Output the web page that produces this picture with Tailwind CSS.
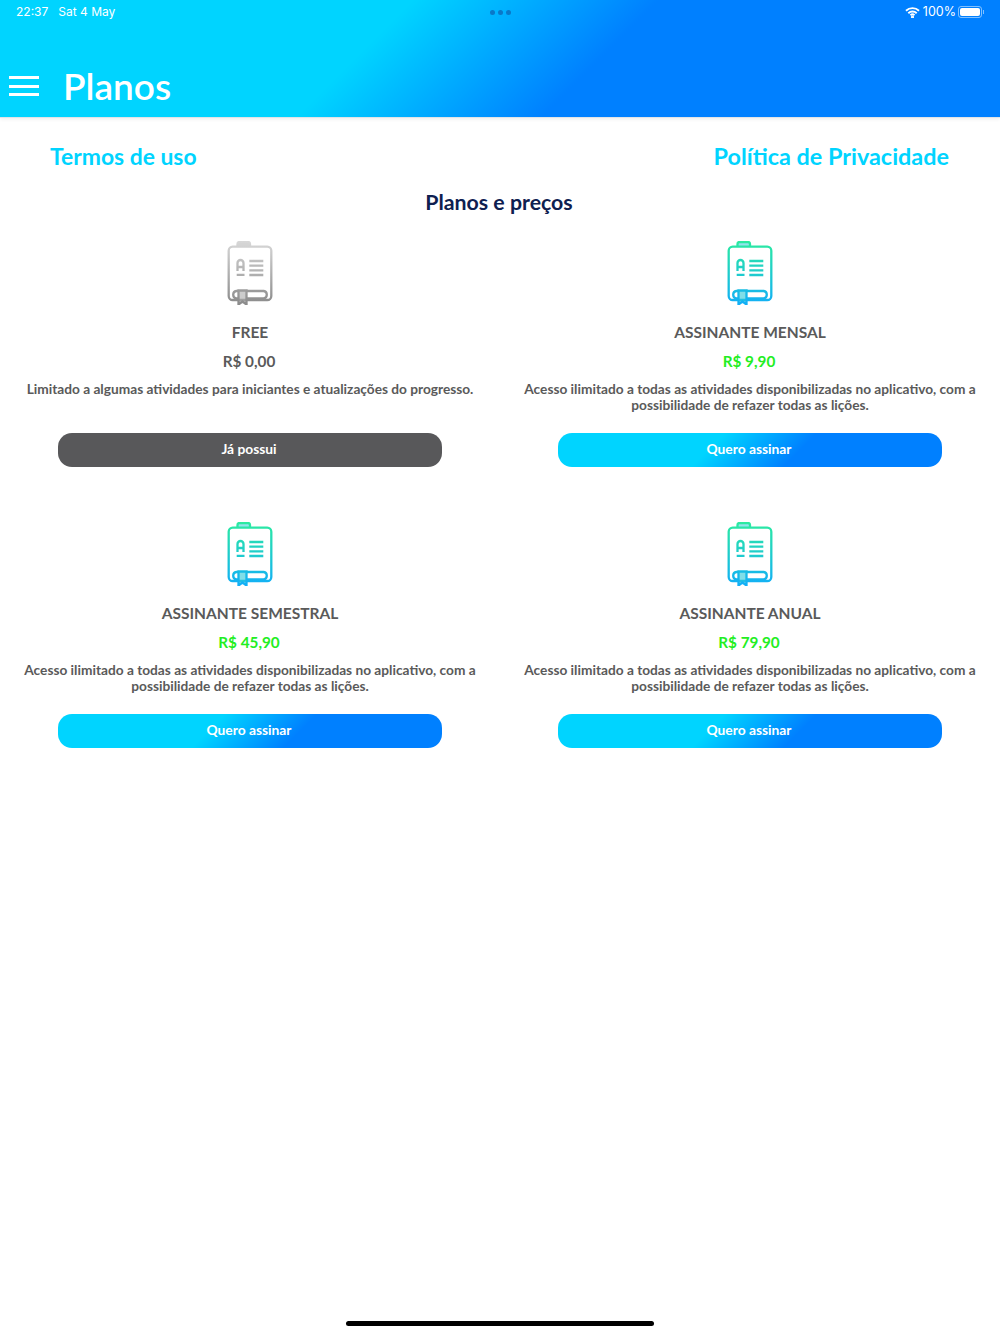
<!DOCTYPE html>
<html lang="en">
<head>
  <meta charset="UTF-8">
  <meta name="viewport" content="width=device-width, initial-scale=1.0">
  <title>Planos</title>
  <script src="https://cdn.jsdelivr.net/npm/@tailwindcss/browser@4"></script>
</head>
<body class="bg-white font-['Lato',sans-serif]">
  <svg class="absolute w-0 h-0">
    <defs>
      <linearGradient id="colored" gradientUnits="userSpaceOnUse" x1="0" y1="0" x2="0" y2="64">
        <stop offset="0" stop-color="#2ceba0"/>
        <stop offset="1" stop-color="#12aef8"/>
      </linearGradient>
      <linearGradient id="gray" gradientUnits="userSpaceOnUse" x1="0" y1="0" x2="0" y2="64">
        <stop offset="0" stop-color="#d8d8d8"/>
        <stop offset="1" stop-color="#8a8a8a"/>
      </linearGradient>
      <symbol id="book" viewBox="0 0 48 64">
        <path d="M11.5 5.5V3a2 2 0 0 1 2-2h8.5a2 2 0 0 1 2 2v2.5" fill="currentColor" fill-opacity="0.5"/>
        <rect x="2.7" y="5.7" width="42.6" height="53.3" rx="4"/>
        <path d="M11.5 30v-8a3 3 0 0 1 6 0v8M11.5 26h6M10.7 33.8h7.8M23.3 20h14M23.3 24.7h14M23.3 29.3h14M23.3 34h14"/>
        <path d="M12.5 50H10.3a3.7 3.7 0 0 0 0 7.3h2.2M20.5 50H37.7a3.7 3.7 0 0 1 0 7.3H20.5"/>
        <path d="M12.5 49.5h8v14l-4-3-4 3z" fill="currentColor" fill-opacity="0.6"/>
      </symbol>
    </defs>
  </svg>

  <div class="relative min-h-[1334px]">
    <header class="h-[117px] bg-[linear-gradient(135deg,#00d4ff_37%,#0080ff_59%)] shadow-[0_1px_0_#e0e4e8,0_2px_4px_rgba(0,0,0,0.08)] text-white">
      <div class="h-6 flex items-center justify-between pl-4 pr-[16px] text-[12px] font-['Inter',sans-serif] relative">
        <div class="flex gap-[10px]"><span>22:37</span><span>Sat 4 May</span></div>
        <div class="absolute left-[490px] top-[10px] flex gap-[3px]">
          <span class="size-[5px] rounded-full bg-[#0a78c8]"></span>
          <span class="size-[5px] rounded-full bg-[#0a78c8]"></span>
          <span class="size-[5px] rounded-full bg-[#0a78c8]"></span>
        </div>
        <div class="flex items-center">
          <svg class="w-[15px] h-[11px] mr-[3px]" viewBox="0 0 15 11" fill="none" stroke="white" stroke-width="1.9">
            <path d="M1 3.8a9.3 9.3 0 0 1 13 0M3.3 6.2a6 6 0 0 1 8.4 0M5.5 8.3a2.9 2.9 0 0 1 4 0"/>
            <circle cx="7.5" cy="10" r="0.6" fill="white"/>
          </svg>
          <span class="text-[12.5px]">100%</span>
          <div class="flex items-center gap-[1px] ml-[2px]">
            <div class="w-[24px] h-[12px] rounded-[3px] border border-white/50 p-[1px]">
              <div class="w-full h-full rounded-[2px] bg-white"></div>
            </div>
            <div class="w-[1px] h-1 bg-white/50"></div>
          </div>
        </div>
      </div>
      <div class="flex items-center pl-[9px] pt-[44px]">
        <div class="w-[30px] flex flex-col gap-[5.5px]">
          <span class="h-[3px] bg-white"></span>
          <span class="h-[3px] bg-white"></span>
          <span class="h-[3px] bg-white"></span>
        </div>
        <h1 class="ml-[24px] text-[37px] leading-[36px] font-semibold">Planos</h1>
      </div>
    </header>

    <nav class="flex justify-between pl-[50px] pr-[51px] pt-[24px] leading-[30px] font-bold text-[#00d4ff]">
      <a class="text-[22.9px]">Termos de uso</a>
      <a class="text-[23.4px]">Política de Privacidade</a>
    </nav>

    <h2 class="mt-[17px] pr-[2px] text-center text-[21.3px] leading-[28px] font-bold text-[#0e2050]">Planos e preços</h2>

    <main class="grid grid-cols-2 pt-[25px] text-[#5a5a5a]">
      <section class="flex flex-col items-center h-[281px]">
        <svg class="w-12 h-16 text-[#aaa]" fill="none" stroke="url(#gray)" stroke-width="2.3"><use href="#book"/></svg>
        <h3 class="mt-[17px] text-[15.5px] leading-5 font-bold">FREE</h3>
        <p class="mt-[9px] pr-[2px] text-[15.3px] leading-5 font-bold">R$ 0,00</p>
        <p class="mt-[10px] h-[52px] px-5 text-center text-[13.7px] leading-[16px] font-bold">Limitado a algumas atividades para iniciantes e atualizações do progresso.</p>
        <button class="w-[384px] h-[34px] pb-[2px] pr-[2px] rounded-[14px] bg-[#58585a] text-white text-[13.8px] font-bold">Já possui</button>
      </section>

      <section class="flex flex-col items-center h-[281px]">
        <svg class="w-12 h-16 text-[#2cc8d8]" fill="none" stroke="url(#colored)" stroke-width="2.3"><use href="#book"/></svg>
        <h3 class="mt-[17px] text-[15.5px] leading-5 font-bold">ASSINANTE MENSAL</h3>
        <p class="mt-[9px] pr-[2px] text-[15.3px] leading-5 font-bold text-[#22ee22]">R$ 9,90</p>
        <p class="mt-[10px] h-[52px] px-5 text-center text-[13.7px] leading-[16px] font-bold">Acesso ilimitado a todas as atividades disponibilizadas no aplicativo, com a possibilidade de refazer todas as lições.</p>
        <button class="w-[384px] h-[34px] pb-[2px] pr-[2px] rounded-[14px] bg-[linear-gradient(135deg,#00d4ff_40%,#0080ff_62%)] text-white text-[13.8px] font-bold">Quero assinar</button>
      </section>

      <section class="flex flex-col items-center h-[281px]">
        <svg class="w-12 h-16 text-[#2cc8d8]" fill="none" stroke="url(#colored)" stroke-width="2.3"><use href="#book"/></svg>
        <h3 class="mt-[17px] text-[15.5px] leading-5 font-bold">ASSINANTE SEMESTRAL</h3>
        <p class="mt-[9px] pr-[2px] text-[15.3px] leading-5 font-bold text-[#22ee22]">R$ 45,90</p>
        <p class="mt-[10px] h-[52px] px-5 text-center text-[13.7px] leading-[16px] font-bold">Acesso ilimitado a todas as atividades disponibilizadas no aplicativo, com a possibilidade de refazer todas as lições.</p>
        <button class="w-[384px] h-[34px] pb-[2px] pr-[2px] rounded-[14px] bg-[linear-gradient(135deg,#00d4ff_40%,#0080ff_62%)] text-white text-[13.8px] font-bold">Quero assinar</button>
      </section>

      <section class="flex flex-col items-center h-[281px]">
        <svg class="w-12 h-16 text-[#2cc8d8]" fill="none" stroke="url(#colored)" stroke-width="2.3"><use href="#book"/></svg>
        <h3 class="mt-[17px] text-[15.5px] leading-5 font-bold">ASSINANTE ANUAL</h3>
        <p class="mt-[9px] pr-[2px] text-[15.3px] leading-5 font-bold text-[#22ee22]">R$ 79,90</p>
        <p class="mt-[10px] h-[52px] px-5 text-center text-[13.7px] leading-[16px] font-bold">Acesso ilimitado a todas as atividades disponibilizadas no aplicativo, com a possibilidade de refazer todas as lições.</p>
        <button class="w-[384px] h-[34px] pb-[2px] pr-[2px] rounded-[14px] bg-[linear-gradient(135deg,#00d4ff_40%,#0080ff_62%)] text-white text-[13.8px] font-bold">Quero assinar</button>
      </section>
    </main>

    <div class="absolute left-[346px] top-[1321px] w-[308px] h-[5px] rounded-full bg-black"></div>
  </div>
</body>
</html>
